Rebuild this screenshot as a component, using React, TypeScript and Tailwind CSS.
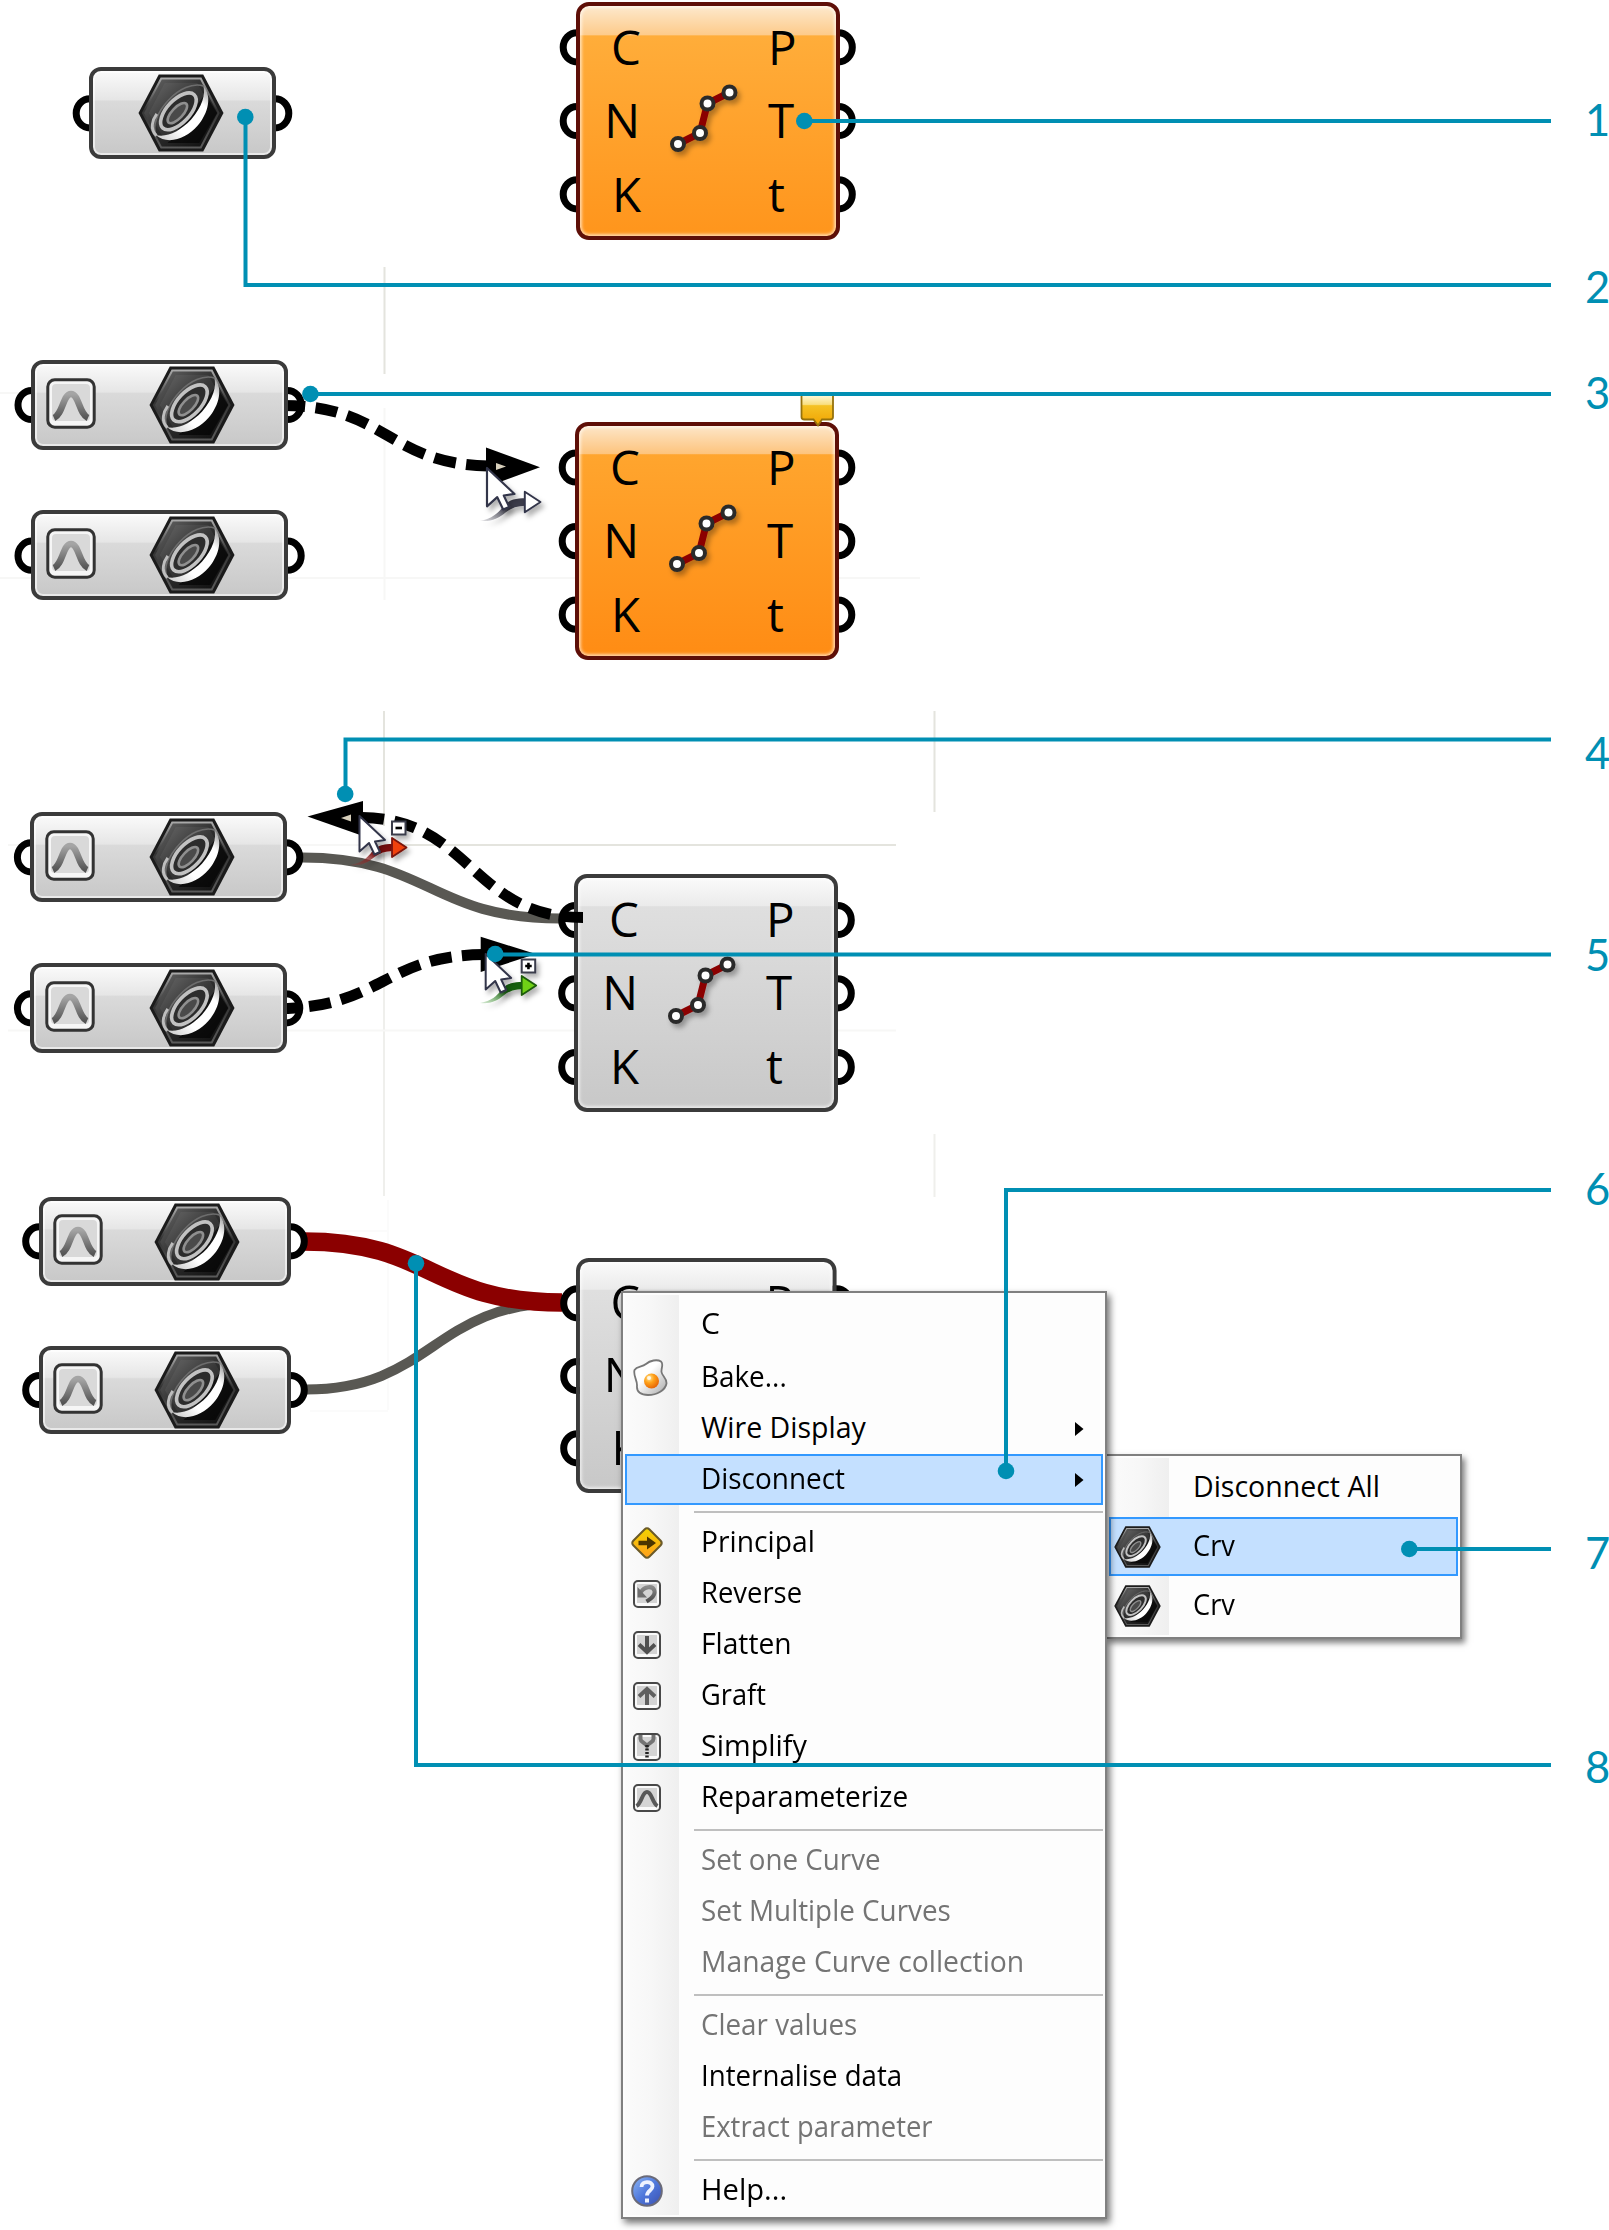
import React, { useLayoutEffect, useRef, useState } from "react";

const TEAL = "#008fb3";

/* Text squeezed horizontally to a given advance width */
function FitText({ children, width }: { children: string; width: number }) {
  const ref = useRef<HTMLSpanElement>(null);
  const [scale, setScale] = useState(1);
  useLayoutEffect(() => {
    if (ref.current && ref.current.offsetWidth) setScale(width / ref.current.offsetWidth);
  }, [width]);
  return (
    <span ref={ref} className="inline-block origin-left whitespace-pre" style={{ transform: `scaleX(${scale})` }}>
      {children}
    </span>
  );
}

function HexIcon({ className }: { className: string }) {
  return (
    <svg viewBox="0 0 87 78" preserveAspectRatio="none" className={className}>
      <path d="M21 0.5H66L86.5 39L66 77.5H21L0.5 39Z" fill="#1b1b1b" />
      <path d="M23.5 4.5H63.5L81.5 39L63.5 73.5H23.5L5 39Z" fill="url(#hexFace)" stroke="url(#hexRim)" strokeWidth="2" />
      <path d="M27 9H60L69 25L36 66H27L11 39Z" fill="#fff" opacity="0.05" />
      <path d="M68 20L80 39L62 69H30Z" fill="#000" opacity="0.6" />
      <g transform="rotate(-46 43 38)">
        <path d="M9 36C10 52 28 61 45 60C62 59 77 50 78 36C74 44 62 50 45 51C28 51 15 46 9 36Z" fill="url(#discRim)" />
        <path d="M9 37C12 27 27 21 43 21C58 21 73 26 78 37" fill="none" stroke="#6d6d6d" strokeWidth="1.6" />
        <path d="M9 37C9 27 18 23 25 22" fill="none" stroke="#bdbdbd" strokeWidth="3" />
        <ellipse cx="42" cy="36" rx="23" ry="11.5" fill="#2c2c2c" stroke="#c2c2c2" strokeWidth="3.6" />
        <ellipse cx="40" cy="36.500" rx="13" ry="5.500" fill="#4a4a4a" stroke="#8f8f8f" strokeWidth="2.6" />
      </g>
    </svg>
  );
}

function Defs() {
  return (
    <svg className="absolute h-0 w-0">
      <defs>
        <linearGradient id="hexFace" x1="0" y1="0" x2="1" y2="1">
          <stop offset="0" stopColor="#6a6a6a" />
          <stop offset="0.45" stopColor="#2e2e2e" />
          <stop offset="1" stopColor="#0c0c0c" />
        </linearGradient>
        <linearGradient id="hexRim" x1="0" y1="0" x2="0" y2="1">
          <stop offset="0" stopColor="#a8a8a8" />
          <stop offset="0.45" stopColor="#333" />
          <stop offset="1" stopColor="#5a5a5a" />
        </linearGradient>
        <linearGradient id="discRim" x1="0" y1="0" x2="1" y2="0">
          <stop offset="0" stopColor="#cfcfcf" />
          <stop offset="0.3" stopColor="#ffffff" />
          <stop offset="0.8" stopColor="#ffffff" />
          <stop offset="1" stopColor="#a5a5a5" />
        </linearGradient>
        <linearGradient id="bell" x1="0" y1="0" x2="0" y2="1">
          <stop offset="0" stopColor="#a5a5a5" />
          <stop offset="1" stopColor="#555" />
        </linearGradient>
        <linearGradient id="glyph" x1="0" y1="0" x2="0" y2="1">
          <stop offset="0" stopColor="#8a8a8a" />
          <stop offset="1" stopColor="#4a4a4a" />
        </linearGradient>
        <linearGradient id="greyTail" x1="0" y1="1" x2="1" y2="0">
          <stop offset="0" stopColor="#3a3a48" stopOpacity="0.1" />
          <stop offset="0.6" stopColor="#3a3a48" />
        </linearGradient>
        <linearGradient id="redTail" x1="0" y1="1" x2="1" y2="0">
          <stop offset="0" stopColor="#a03030" stopOpacity="0.2" />
          <stop offset="0.6" stopColor="#7a0c0c" />
        </linearGradient>
        <linearGradient id="greenTail" x1="0" y1="1" x2="1" y2="0">
          <stop offset="0" stopColor="#4ca040" stopOpacity="0.2" />
          <stop offset="0.6" stopColor="#14600a" />
        </linearGradient>
        <linearGradient id="sign" x1="0" y1="0" x2="0" y2="1">
          <stop offset="0" stopColor="#f2d400" />
          <stop offset="1" stopColor="#ff9f1c" />
        </linearGradient>
        <linearGradient id="balloon" x1="0" y1="0" x2="0" y2="1">
          <stop offset="0" stopColor="#fffbe0" />
          <stop offset="0.32" stopColor="#f9df80" />
          <stop offset="0.36" stopColor="#f5c224" />
          <stop offset="1" stopColor="#f0a200" />
        </linearGradient>
        <linearGradient id="egg" x1="0" y1="0" x2="1" y2="1">
          <stop offset="0.4" stopColor="#ffffff" />
          <stop offset="1" stopColor="#a8a8a8" />
        </linearGradient>
        <radialGradient id="yolk" cx="0.35" cy="0.3" r="0.8">
          <stop offset="0" stopColor="#ffe9a0" />
          <stop offset="0.4" stopColor="#ffa21a" />
          <stop offset="1" stopColor="#e25a00" />
        </radialGradient>
        <linearGradient id="help" x1="0" y1="0" x2="1" y2="1">
          <stop offset="0" stopColor="#8fb8f5" />
          <stop offset="0.5" stopColor="#4f78dc" />
          <stop offset="1" stopColor="#3a4fae" />
        </linearGradient>
        <filter id="soft" x="-30%" y="-30%" width="160%" height="160%">
          <feDropShadow dx="3" dy="4" stdDeviation="2.5" floodColor="#000" floodOpacity="0.3" />
        </filter>
      </defs>
    </svg>
  );
}

const grips: [number, number][] = [
  [90, 113.3], [275, 113.3],
  [31.8, 405], [287.4, 405], [31.8, 555.7], [287.4, 555.7],
  [31.2, 857.3], [286, 857.3], [31.2, 1008.3], [286, 1008.3],
  [39.5, 1241.3], [290.5, 1241.3], [39.5, 1390], [290.5, 1390],
  [577, 47.3], [838.5, 47.3], [577, 121], [838.5, 121], [577, 194.3], [838.5, 194.3],
  [576, 467.5], [838, 467.5], [576, 541.2], [838, 541.2], [576, 614.7], [838, 614.7],
  [575.5, 920], [837.5, 920], [575.5, 993.3], [837.5, 993.3], [575.5, 1067], [837.5, 1067],
  [577.5, 1303.3], [836.5, 1303.3], [577.5, 1376], [577.5, 1448.3],
];

function Wires() {
  return (
    <svg viewBox="0 0 1609 2230" className="absolute inset-0 h-full w-full">
      <g stroke="#e4e4de" strokeWidth="2" fill="none">
        <path d="M384.5 267V374M384 711V826M934.5 711V812M384 845H896" />
        <path d="M384 845V1196M934.5 1134V1197" stroke="#efefec" />
        <path d="M0 393H575M0 578H920M384.5 408V600M8 845H384M8 1030.5H896" stroke="#f7f7f6" />
        <path d="M388 1200V1410M310 1231H388M310 1411H388" stroke="#fbfbfb" />
      </g>
      <g fill="none" strokeWidth="10" stroke="#595853">
        <path d="M302 857.5C430 857.5 430 918.5 560 918.5" />
        <path d="M306 1389.5C433 1389.5 433 1303 562 1303" />
        <path d="M304 1241.5C432 1241.5 432 1302.5 562 1302.5" stroke="#8b0000" strokeWidth="18.5" />
      </g>
      <g fill="#fff" stroke="#000" strokeWidth="7">
        {grips.map(([x, y]) => (
          <ellipse key={`${x}-${y}`} cx={x} cy={y} rx="13.8" ry="14.6" />
        ))}
      </g>
      <g fill="none" stroke="#000" strokeWidth="11" strokeDasharray="22 10.5">
        <path d="M283 405.5C388 405.5 388 466 493 466" />
        <path d="M276.5 1008.5C383 1008.5 383 954.5 487 954.5" />
      </g>
      <path d="M486 447.5L540 467.3L486 487Z" />
      <path d="M496 463L506 466.5L496 470Z" fill="#d8d0bc" />
      <path d="M480.7 936.7L535.8 954L480.7 972Z" />
      <path d="M363 801L307.5 816.5L363 836Z" />
      <path d="M341 818L351 814.5V821.5Z" fill="#d8d0bc" />
    </svg>
  );
}

function ParamNode({ pos, toggle = true }: { pos: string; toggle?: boolean }) {
  return (
    <div
      className={`absolute flex items-center rounded-[12px] border-4 border-[#3b3b3b] bg-[linear-gradient(#fafafa,#e6e6e6_34%,#dadada_36%,#c8c8c8)] shadow-[inset_0_0_0_2px_rgba(255,255,255,0.6)] ${pos} ${toggle ? "justify-between" : "justify-center pr-[3px]"}`}
    >
      {toggle && (
        <svg viewBox="0 0 50 51" preserveAspectRatio="none" className="-mt-1 h-[51px] w-[50px]">
          <rect x="1.8" y="1.8" width="46.4" height="47.4" rx="7" fill="#f6f6f6" stroke="#333" strokeWidth="3" />
          <rect x="6" y="6" width="38" height="37" rx="4" fill="#d9d9d9" />
          <path d="M8 40C17 36 17 16 25 16C33 16 33 36 42 40" fill="none" stroke="url(#bell)" strokeWidth="6.5" />
        </svg>
      )}
      <HexIcon className="h-[78px] w-[86px] shrink-0" />
    </div>
  );
}

const portText = "flex h-[73.4px] items-center leading-none";

function Component({ pos, skin }: { pos: string; skin: string }) {
  return (
    <div
      className={`absolute h-[238px] w-[264px] rounded-[13px] border-4 font-['Open_Sans','Noto_Sans',sans-serif] text-[47.5px] text-black ${skin} ${pos}`}
    >
      <div className="flex h-full justify-between px-[30px] pt-[4px]">
        <div className="flex w-[31px] flex-col items-end">
          <span className={portText}>C</span>
          <span className={`${portText} mr-[1px]`}>N</span>
          <span className={portText}>K</span>
        </div>
        <svg viewBox="0 0 70 70" className="mt-[72px] -ml-[1px] h-[70px] w-[70px] overflow-visible">
          <g filter="url(#soft)">
            <path d="M9 62L31 51L38.500 21.500L60.500 10.500" fill="none" stroke="#8b0000" strokeWidth="7" />
            <g fill="#fff" stroke="#2b2b2b" strokeWidth="4">
              <circle cx="9" cy="62" r="6" />
              <circle cx="31" cy="51" r="6" />
              <circle cx="38.500" cy="21.500" r="6" />
              <circle cx="60.500" cy="10.500" r="6" />
            </g>
          </g>
        </svg>
        <div className="flex w-[38px] flex-col items-start">
          <span className={portText}>P</span>
          <span className={portText}>T</span>
          <span className={portText}>t</span>
        </div>
      </div>
    </div>
  );
}

const orangeSkin =
  "border-[#5e0f08] bg-[linear-gradient(#fde9cd,#fdcb8b_12.5%,#ffad3a_13%,#ff951c)] shadow-[inset_0_0_3px_2px_rgba(255,255,255,0.6)]";
const deepOrangeSkin =
  "border-[#5e0f08] bg-[linear-gradient(#fde6c8,#fdc47e_12%,#ffa52e_12.5%,#ff8c14)] shadow-[inset_0_0_3px_2px_rgba(255,255,255,0.6)]";
const greySkin =
  "border-[#3b3b3b] bg-[linear-gradient(#fafafa,#ebebeb_12%,#dfdfdf_12.5%,#c8c8c8)] shadow-[inset_0_0_3px_2px_rgba(255,255,255,0.6)]";

type CursorProps = { x: number; y: number; s?: number; dx?: number; head: string; tail: string; line: string; sign?: string };

function Cursor({ x, y, s = 1, dx = 0, head, tail, line, sign }: CursorProps) {
  return (
    <g transform={`translate(${x} ${y}) scale(${s})`}>
      <g transform={`translate(${dx} 0)`} filter="url(#soft)">
        <path d="M-9 49C2 47 8 42 13 35C18 29 25 28 33 28V35C26 35 20 37 15 41C8 47 1 50 -9 49Z" fill={tail} />
        <path d="M32.500 22L47 31.500L32.500 41Z" fill={head} stroke={line} strokeWidth="1.800" strokeLinejoin="round" />
        {sign && (
          <g>
            <rect x="32.500" y="5.500" width="13.500" height="13" fill="#fff" stroke="#3a3d4c" strokeWidth="2" />
            <path d={sign} stroke="#000" strokeWidth="2.600" />
          </g>
        )}
      </g>
      <path d="M0 0V35.500L9.500 27L15 38.500L20.500 36L15.500 25.500L25.500 24Z" fill="#fff" stroke="#33354a" strokeWidth="2" strokeLinejoin="round" filter="url(#soft)" />
    </g>
  );
}

function Overlay() {
  return (
    <svg viewBox="0 0 1609 2230" className="absolute inset-0 h-full w-full">
      <path d="M583 917.500C471 917.500 471 817.500 360 817.500" fill="none" stroke="#000" strokeWidth="11" strokeDasharray="22 10.500" />
      <Cursor x={487} y={468} s={1.08} dx={2.5} head="#fff" tail="url(#greyTail)" line="#33354a" />
      <Cursor x={359.5} y={816} head="#f0420f" tail="url(#redTail)" line="#7a1408" sign="M36 12H42.500" />
      <Cursor x={485.7} y={954} dx={3.5} head="#6fd016" tail="url(#greenTail)" line="#1e5c08" sign="M36 12H42.500M39.250 8.800V15.200" />
      <path d="M801.500 394.500H833V417Q833 419.500 830 419.500H822L818 425.500L813.500 419.500H804.500Q801.500 419.500 801.500 417Z" fill="url(#balloon)" stroke="#96720c" strokeWidth="1.800" />
    </svg>
  );
}

const callouts = [
  { n: "1", dot: [804.3, 121], d: "M804 121H1551", label: "top-[93px]" },
  { n: "2", dot: [245.3, 117], d: "M245.500 117V285H1551", label: "top-[260px]" },
  { n: "3", dot: [310.4, 394], d: "M310 394H1551", label: "top-[366px]" },
  { n: "4", dot: [345.2, 794], d: "M345.500 794V739.500H1551", label: "top-[726px]" },
  { n: "5", dot: [495.2, 954], d: "M495 954.500H1551", label: "top-[928px]" },
  { n: "6", dot: [1006, 1471], d: "M1006 1471V1190H1551", label: "top-[1162px]" },
  { n: "7", dot: [1409.3, 1549], d: "M1409 1549H1551", label: "top-[1526px]" },
  { n: "8", dot: [416, 1263.3], d: "M416 1263V1765H1551", label: "top-[1740px]" },
];

function Callouts() {
  return (
    <>
      <svg viewBox="0 0 1609 2230" className="absolute inset-0 h-full w-full">
        {callouts.map((c) => (
          <g key={c.n}>
            <path d={c.d} fill="none" stroke={TEAL} strokeWidth="4" />
            <circle cx={c.dot[0]} cy={c.dot[1]} r="8.300" fill={TEAL} />
          </g>
        ))}
      </svg>
      {callouts.map((c) => (
        <span
          key={c.n}
          className={`absolute left-[1585px] font-[Lato,sans-serif] text-[43.5px] leading-[53px] text-[#008fb3] ${c.label}`}
        >
          {c.n}
        </span>
      ))}
    </>
  );
}

function Tile({ children }: { children: React.ReactNode }) {
  return (
    <svg viewBox="0 0 28 28" className="h-7 w-7">
      <rect x="1" y="1" width="26" height="26" rx="4" fill="#fafafa" stroke="#484848" strokeWidth="2" />
      <rect x="4" y="4" width="20" height="19" fill="#d4d4d4" />
      {children}
    </svg>
  );
}

const icons: Record<string, React.ReactNode> = {
  bake: (
    <svg viewBox="0 0 36 38" className="ml-[7px] h-[38px] w-9 shrink-0">
      <path d="M1.500 11C4 7 9 8.500 13 5C17 1.500 24 0 28 2.500C31 5 28 9 28.500 13C29 17 34 19 33.500 24.500C32.500 31 24 36 15 36C8 36 3.500 33 4 27C4.500 21 0 17 1.500 11Z" fill="url(#egg)" stroke="#777" strokeWidth="1.800" />
      <circle cx="18.500" cy="22" r="7.500" fill="url(#yolk)" />
      <circle cx="16" cy="19" r="2" fill="#fff" opacity="0.8" />
    </svg>
  ),
  principal: (
    <svg viewBox="0 0 32 32" className="h-8 w-8">
      <path d="M16 1.300Q17.300 1.300 18.500 2.500L29.500 13.500Q32 16 29.500 18.500L18.500 29.500Q16 32 13.500 29.500L2.500 18.500Q0 16 2.500 13.500L13.500 2.500Q14.700 1.300 16 1.300Z" fill="url(#sign)" stroke="#6b5a28" strokeWidth="2" />
      <path d="M7.500 13.800H16V9.500L25 16L16 22.500V18.200H7.500Z" fill="#4a3500" />
    </svg>
  ),
  reverse: (
    <Tile>
      <path d="M8 12C11 6.500 20 5 21.500 11C22.500 16 17 19 13.500 21.500" fill="none" stroke="url(#glyph)" strokeWidth="4" />
      <path d="M4.500 7V17.500H14Z" fill="#6e6e6e" />
    </Tile>
  ),
  flatten: (
    <Tile>
      <path d="M14 5V21M6 13.500L14 21L22 13.500" fill="none" stroke="#505050" strokeWidth="4" />
    </Tile>
  ),
  graft: (
    <Tile>
      <path d="M14 23V7M6 14.500L14 7L22 14.500" fill="none" stroke="#606060" strokeWidth="4" />
    </Tile>
  ),
  simplify: (
    <Tile>
      <path d="M7.500 2V6C7.500 9 11 9 14 13C17 9 20.500 9 20.500 6V2" fill="none" stroke="#747474" strokeWidth="4" />
      <path d="M14 12V26" stroke="#222" strokeWidth="3.500" strokeDasharray="2 1.500" />
    </Tile>
  ),
  reparam: (
    <Tile>
      <path d="M3.500 22C9 19 9 8 14 8C19 8 19 19 24.500 22" fill="none" stroke="#585858" strokeWidth="4" />
    </Tile>
  ),
  help: (
    <svg viewBox="0 0 32 32" className="h-8 w-8">
      <circle cx="16" cy="16" r="14.800" fill="url(#help)" stroke="#6a6a78" strokeWidth="2" />
      <path d="M10.500 12C10.500 5.500 21.500 5.500 21.500 11.500C21.500 15.500 16 15.500 16 20.500" fill="none" stroke="#eef3ff" strokeWidth="3.800" />
      <rect x="14" y="23.500" width="4" height="4" fill="#eef3ff" />
    </svg>
  ),
};

type Item = { label: string; w: number; icon?: string; arrow?: boolean; active?: boolean; off?: boolean };

const groups: Item[][] = [
  [
    { label: "Bake...", w: 86, icon: "bake" },
    { label: "Wire Display", w: 165, arrow: true },
    { label: "Disconnect", w: 144, arrow: true, active: true },
  ],
  [
    { label: "Principal", w: 114, icon: "principal" },
    { label: "Reverse", w: 101, icon: "reverse" },
    { label: "Flatten", w: 91, icon: "flatten" },
    { label: "Graft", w: 65, icon: "graft" },
    { label: "Simplify", w: 106, icon: "simplify" },
    { label: "Reparameterize", w: 207, icon: "reparam" },
  ],
  [
    { label: "Set one Curve", w: 180, off: true },
    { label: "Set Multiple Curves", w: 250, off: true },
    { label: "Manage Curve collection", w: 323, off: true },
  ],
  [
    { label: "Clear values", w: 156, off: true },
    { label: "Internalise data", w: 201 },
    { label: "Extract parameter", w: 232, off: true },
  ],
  [{ label: "Help...", w: 86, icon: "help" }],
];

const menuFrame =
  "absolute border-2 border-[#808080] bg-[#fdfdfd] p-[2px] font-['Open_Sans','Noto_Sans',sans-serif] text-[28.500px] leading-none text-black";

function MenuRow({ item }: { item: Item }) {
  return (
    <div
      className={`flex h-[51px] items-center border-2 ${item.active ? "border-[#3399ff] bg-[#c4e0ff]" : "border-transparent"} ${item.off ? "text-[#747474]" : ""}`}
    >
      <div className="flex w-[40px] shrink-0 justify-center">{item.icon && icons[item.icon]}</div>
      <div className="ml-[34px] grow pb-[3px]">
        <FitText width={item.w}>{item.label}</FitText>
      </div>
      {item.arrow && (
        <svg viewBox="0 0 9 14" className="mr-[17px] h-[14px] w-[9px]">
          <path d="M0 0L8.500 7L0 14Z" />
        </svg>
      )}
    </div>
  );
}

function ContextMenu() {
  return (
    <div className={`${menuFrame} left-[621px] top-[1291px] h-[928px] w-[486px] shadow-[3px_4px_7px_rgba(0,0,0,0.55)]`}>
      <div className="h-full bg-[linear-gradient(90deg,#fbfbfb,#f7f7f7_26px,#efefef_54px,transparent_54px)]">
        <div className="flex h-[57px] items-center pl-[76px]">
          <FitText width={19}>C</FitText>
        </div>
        {groups.map((g, i) => (
          <React.Fragment key={i}>
            {i > 0 && (
              <div className="flex h-3 items-center pt-px">
                <div className="ml-[69px] h-[2px] grow bg-[#bfbfbf]" />
              </div>
            )}
            {g.map((item) => (
              <MenuRow key={item.label} item={item} />
            ))}
          </React.Fragment>
        ))}
      </div>
    </div>
  );
}

function SubMenu() {
  const rows = [
    { label: "Disconnect All", w: 187, hex: false, active: false },
    { label: "Crv", w: 42, hex: true, active: true },
    { label: "Crv", w: 42, hex: true, active: false },
  ];
  return (
    <div className={`${menuFrame} left-[1105px] top-[1454px] h-[185px] w-[357px] shadow-[3px_4px_6px_rgba(0,0,0,0.5)]`}>
      <div className="h-full bg-[linear-gradient(90deg,#fbfbfb,#f7f7f7_30px,#efefef_60px,transparent_60px)]">
        {rows.map((r, i) => (
          <div
            key={i}
            className={`flex h-[59px] items-center border-2 ${r.active ? "border-[#3399ff] bg-[#c4e0ff]" : "border-transparent"}`}
          >
            <div className="ml-[3px] w-[47px]">{r.hex && <HexIcon className="h-[42px] w-[47px]" />}</div>
            <div className="ml-[32px] pb-[2px]">
              <FitText width={r.w}>{r.label}</FitText>
            </div>
          </div>
        ))}
      </div>
    </div>
  );
}

export default function App() {
  return (
    <main className="relative h-[2230px] w-[1609px] overflow-hidden bg-white">
      <Defs />
      <Wires />
      <ParamNode pos="left-[89px] top-[67px] h-[92px] w-[187px]" toggle={false} />
      <ParamNode pos="left-[31px] top-[360px] h-[90px] w-[257px] pl-[11px] pr-[49px]" />
      <ParamNode pos="left-[31px] top-[510px] h-[90px] w-[257px] pl-[11px] pr-[49px]" />
      <ParamNode pos="left-[30px] top-[812px] h-[90px] w-[257px] pl-[11px] pr-[48px]" />
      <ParamNode pos="left-[30px] top-[963px] h-[90px] w-[257px] pl-[11px] pr-[48px]" />
      <ParamNode pos="left-[39px] top-[1197px] h-[89px] w-[252px] pl-[10px] pr-[47px]" />
      <ParamNode pos="left-[39px] top-[1346px] h-[88px] w-[252px] pl-[10px] pr-[47px]" />
      <Component pos="left-[576px] top-[2px]" skin={orangeSkin} />
      <Component pos="left-[575px] top-[422px]" skin={deepOrangeSkin} />
      <Component pos="left-[574px] top-[874px]" skin={greySkin} />
      <Component pos="left-[576px] top-[1258px] origin-top-left scale-[0.987]" skin={greySkin} />
      <Overlay />
      <SubMenu />
      <ContextMenu />
      <Callouts />
    </main>
  );
}
